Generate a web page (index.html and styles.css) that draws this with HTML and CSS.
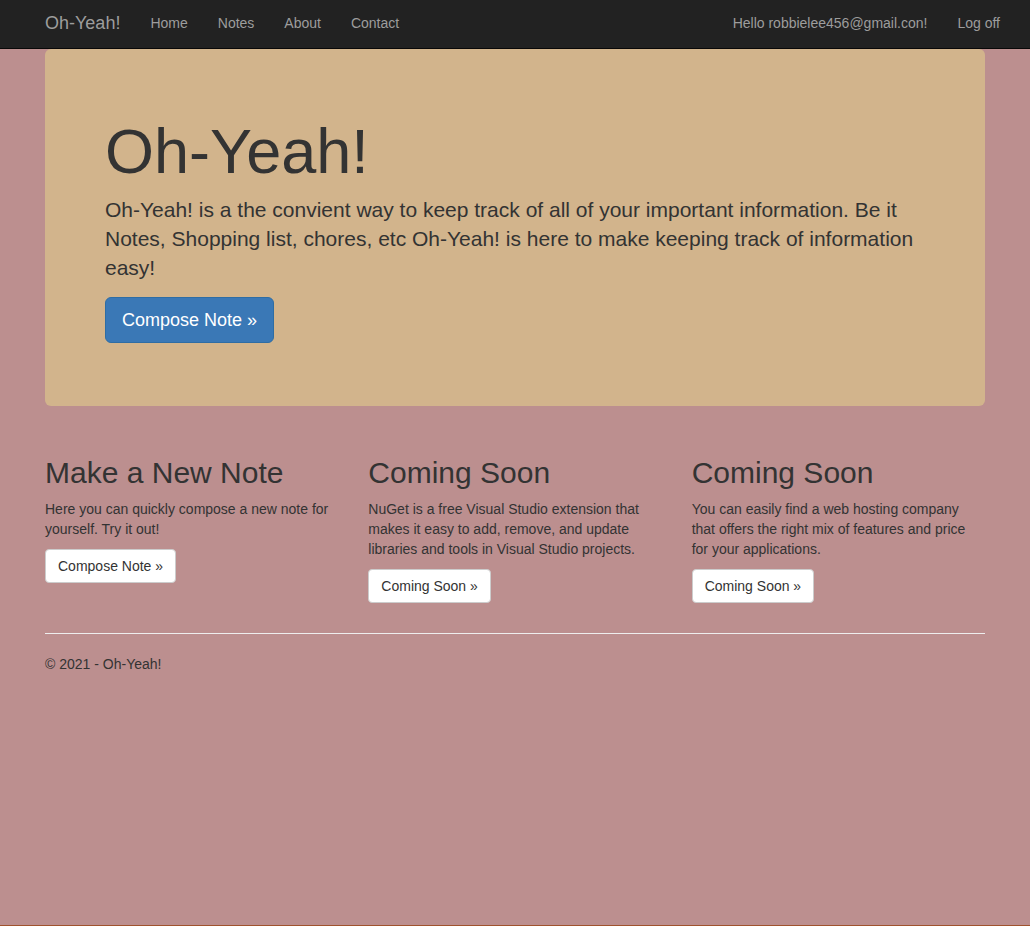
FILE: index.html
```html
<!DOCTYPE html>
<html>
<head>
<meta charset="utf-8">
<title>Home Page - Oh-Yeah!</title>
<link rel="stylesheet" href="styles.css">
</head>
<body>
<nav class="navbar">
  <div class="container nav-inner">
    <a class="brand" href="#">Oh-Yeah!</a>
    <ul class="nav-links">
      <li><a href="#">Home</a></li>
      <li><a href="#">Notes</a></li>
      <li><a href="#">About</a></li>
      <li><a href="#">Contact</a></li>
    </ul>
    <ul class="nav-links nav-right">
      <li><a href="#">Hello robbielee456@gmail.con!</a></li>
      <li><a href="#">Log off</a></li>
    </ul>
  </div>
</nav>
<main class="container body-content">
  <div class="jumbotron">
    <h1>Oh-Yeah!</h1>
    <p class="lead">Oh-Yeah! is a the convient way to keep track of all of your important information. Be it Notes, Shopping list, chores, etc Oh-Yeah! is here to make keeping track of information easy!</p>
    <p class="btn-wrap"><a class="btn btn-primary btn-lg" href="#">Compose Note &raquo;</a></p>
  </div>
  <div class="row">
    <div class="col">
      <h2>Make a New Note</h2>
      <p>Here you can quickly compose a new note for yourself. Try it out!</p>
      <p><a class="btn btn-default" href="#">Compose Note &raquo;</a></p>
    </div>
    <div class="col">
      <h2>Coming Soon</h2>
      <p>NuGet is a free Visual Studio extension that makes it easy to add, remove, and update libraries and tools in Visual Studio projects.</p>
      <p><a class="btn btn-default" href="#">Coming Soon &raquo;</a></p>
    </div>
    <div class="col">
      <h2>Coming Soon</h2>
      <p>You can easily find a web hosting company that offers the right mix of features and price for your applications.</p>
      <p><a class="btn btn-default" href="#">Coming Soon &raquo;</a></p>
    </div>
  </div>
  <hr class="divider">
  <footer class="footer">
    <p>&copy; 2021 - Oh-Yeah!</p>
  </footer>
</main>
</body>
</html>
```
FILE: styles.css
```css
* { box-sizing: border-box; }
html { height: 100%; }
body {
  margin: 0;
  min-height: 100%;
  background: #bc8f8f;
  color: #333;
  font-family: "Liberation Sans", Arial, Helvetica, sans-serif;
  font-size: 14px;
  line-height: 20px;
  border-bottom: 1px solid #a0522d;
}
a { text-decoration: none; }
p { margin: 0 0 10px; }

.container {
  width: 970px;
  margin: 0 auto;
  padding: 0 15px;
}

.navbar {
  background: #222;
  border-bottom: 1px solid #080808;
  height: 49px;
}
.nav-inner {
  display: flex;
  align-items: flex-start;
  height: 48px;
}
.brand {
  color: #9d9d9d;
  font-size: 18px;
  line-height: 20px;
  padding: 13px 15px 15px 0;
}
.nav-links {
  list-style: none;
  margin: 0;
  padding: 0;
  display: flex;
}
.nav-links a {
  display: block;
  color: #9d9d9d;
  padding: 13px 15px 15px;
  line-height: 20px;
}
.nav-right {
  margin-left: auto;
  margin-right: -30px;
}

.jumbotron {
  background: #d2b48c;
  border-radius: 6px;
  padding: 48px 60px;
  margin-bottom: 30px;
}
.jumbotron h1 {
  font-size: 63px;
  font-weight: 500;
  line-height: 69px;
  margin: 20px 0 9px;
}
.jumbotron .lead {
  font-size: 21px;
  line-height: 29px;
  margin: 0 0 15px;
}
.jumbotron .btn-wrap { margin: 0 0 15px; }

.btn {
  display: inline-block;
  border: 1px solid transparent;
  text-align: center;
  white-space: nowrap;
}
.btn-lg {
  font-size: 18px;
  line-height: 24px;
  padding: 10px 16px;
  border-radius: 6px;
}
.btn-primary {
  color: #fff;
  background: #3a78b6;
  border-color: #2e6da4;
}
.btn-default {
  color: #333;
  background: #fff;
  border-color: #ccc;
  padding: 6px 12px;
  font-size: 14px;
  line-height: 20px;
  border-radius: 4px;
}

.row {
  display: grid;
  grid-template-columns: repeat(3, 1fr);
  margin: 0 -15px;
}
.col { padding: 0 15px; }
.col h2 {
  font-size: 30px;
  font-weight: 500;
  line-height: 33px;
  margin: 20px 0 10px;
}

.divider {
  border: 0;
  border-top: 1px solid #eee;
  margin: 20px 0;
}
.footer p { margin: 0 0 10px; }
```
